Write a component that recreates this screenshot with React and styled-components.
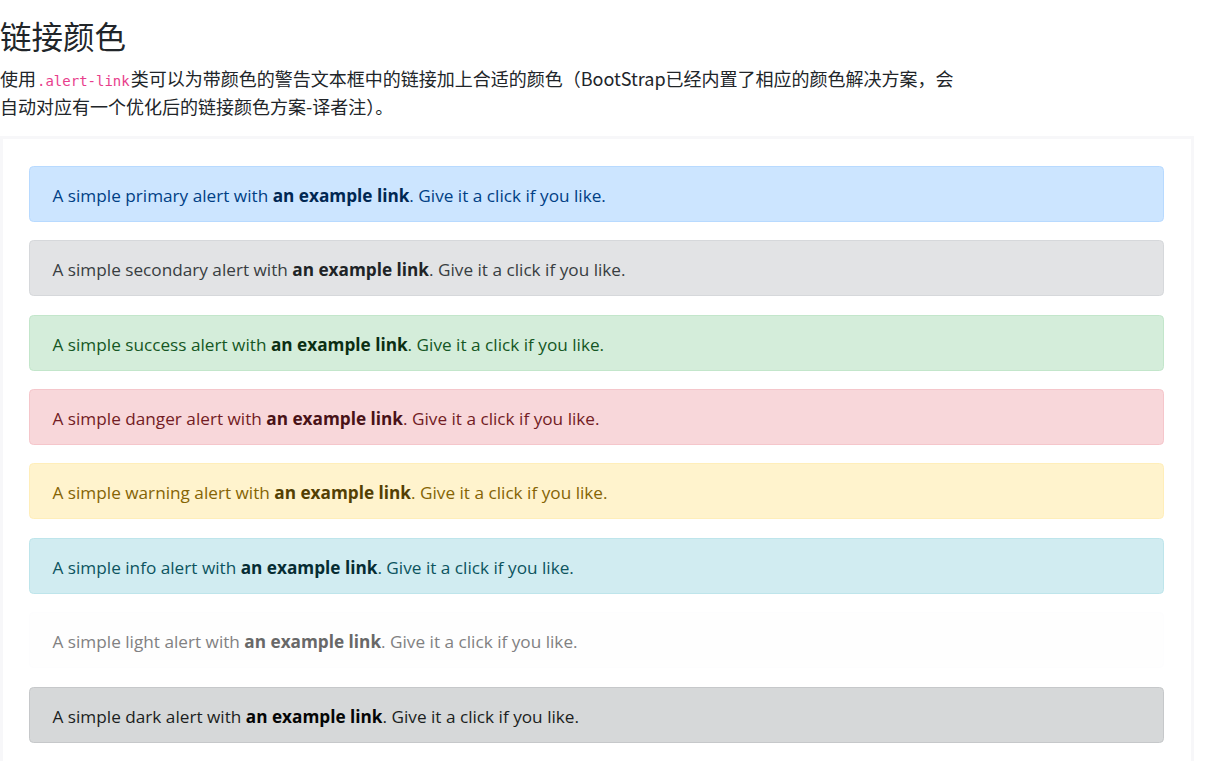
import React from "react";
import styled, { createGlobalStyle } from "styled-components";

const Global = createGlobalStyle`
  html, body { margin: 0; padding: 0; background: #fff; }
  body {
    font-family: "Open Sans", "Noto Sans CJK SC", sans-serif;
    font-size: 18px;
    color: #212529;
  }
  * { box-sizing: border-box; }
`;

const Page = styled.div`
  padding-top: 17px;
  width: 1194px;
`;

const Title = styled.h3`
  margin: 0 0 9px;
  font-size: 31.5px;
  font-weight: 400;
  line-height: 1.2;
  color: #212529;
  font-family: "Noto Sans CJK SC", sans-serif;
`;

const Lead = styled.p`
  margin: 0 0 16px;
  max-width: 962px;
  font-size: 18px;
  line-height: 28px;
  font-family: "Noto Sans CJK SC", sans-serif;
  font-weight: 400;
`;

const Code = styled.code`
  display: inline-block;
  margin: 0 1px;
  font-family: "DejaVu Sans Mono", "Liberation Mono", monospace;
  font-size: 14px;
  line-height: 1;
  color: #e83e8c;
`;

const Example = styled.div`
  border: 3px solid #f7f7f9;
  padding: 27px 27px 27px 26px;
`;

const variants = {
  primary: ["#004085", "#cce5ff", "#b8daff", "#002752"],
  secondary: ["#383d41", "#e2e3e5", "#d6d8db", "#202326"],
  success: ["#155724", "#d4edda", "#c3e6cb", "#0b2e13"],
  danger: ["#721c24", "#f8d7da", "#f5c6cb", "#491217"],
  warning: ["#856404", "#fff3cd", "#ffeeba", "#533f03"],
  info: ["#0c5460", "#d1ecf1", "#bee5eb", "#062c33"],
  light: ["#818182", "#fefefe", "#fdfdfe", "#686868"],
  dark: ["#1b1e21", "#d6d8d9", "#c6c8ca", "#040505"],
};

const Alert = styled.div`
  padding: 15px 22.5px 12px;
  margin-bottom: 18.4px;
  border: 1px solid ${(p) => variants[p.$v][2]};
  border-radius: 4.5px;
  background: ${(p) => variants[p.$v][1]};
  color: ${(p) => variants[p.$v][0]};
  font-size: 17.2px;
  line-height: 27px;
  height: 56px;
  &:last-child { margin-bottom: 0; }
`;

const AlertLink = styled.a`
  font-weight: 700;
  color: ${(p) => variants[p.$v][3]};
  text-decoration: none;
`;

const names = ["primary", "secondary", "success", "danger", "warning", "info", "light", "dark"];

export default function App() {
  return (
    <Page>
      <Global />
      <Title>链接颜色</Title>
      <Lead>
        使用<Code>.alert-link</Code>类可以为带颜色的警告文本框中的链接加上合适的颜色（BootStrap已经内置了相应的颜色解决方案，会自动对应有一个优化后的链接颜色方案-译者注）。
      </Lead>
      <Example>
        {names.map((n) => (
          <Alert key={n} $v={n}>
            A simple {n} alert with <AlertLink $v={n}>an example link</AlertLink>. Give it a click if you like.
          </Alert>
        ))}
      </Example>
    </Page>
  );
}
